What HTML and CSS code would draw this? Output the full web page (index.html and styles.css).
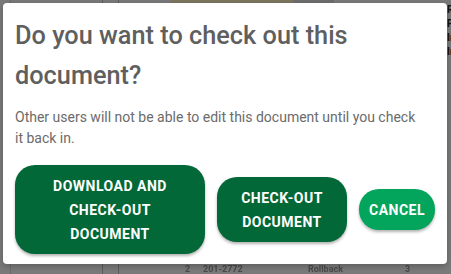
FILE: index.html
```html
<!DOCTYPE html>
<html lang="en">
<head>
<meta charset="utf-8">
<title>Check out document</title>
<link rel="stylesheet" href="styles.css">
</head>
<body>
<div class="page">
  <div class="side"><div class="side-inner"></div></div>
  <div class="gutter"></div>
  <div class="main">
    <div class="topbar"><span class="tb-a"></span><span class="tb-b"></span></div>
    <div class="spacer"></div>
    <div class="row-line"></div>
    <div class="row-line"></div>
    <div class="bottom-row"><span class="c1">2</span><span class="c2">201-2772</span><span class="c3">Rollback</span><span class="c4">3</span></div>
  </div>
  <div class="right-col"><span>R</span><span>P</span><span>In</span><span>In</span></div>
</div>
<div class="overlay">
  <div class="dialog">
    <h1 class="title">Do you want to check out this document?</h1>
    <p class="message">Other users will not be able to edit this document until you check it back in.</p>
    <div class="actions">
      <button class="btn btn-primary btn-wide">DOWNLOAD AND CHECK-OUT DOCUMENT</button>
      <button class="btn btn-primary btn-mid">CHECK-OUT DOCUMENT</button>
      <button class="btn btn-cancel">CANCEL</button>
    </div>
  </div>
</div>
</body>
</html>
```
FILE: styles.css
```css
html, body {
  margin: 0;
  padding: 0;
}
body {
  width: 451px;
  height: 274px;
  overflow: hidden;
  background: #7a7a7a;
  font-family: Roboto, "Liberation Sans", sans-serif;
  position: relative;
}
.page {
  display: flex;
  height: 274px;
}
.side {
  width: 102px;
  border-right: 1px solid #5c5c5c;
  display: flex;
}
.side-inner {
  margin-left: 10px;
  border-left: 1px solid #6a6a6a;
  flex: 1;
}
.gutter {
  width: 15px;
  border-right: 1px solid #5c5c5c;
}
.main {
  flex: 1;
  display: flex;
  flex-direction: column;
}
.topbar {
  height: 3px;
  display: flex;
}
.tb-a {
  margin-left: 52px;
  width: 123px;
  background: #7d7660;
}
.tb-b {
  width: 40px;
  background: #6e6e6e;
}
.spacer {
  flex: 1;
}
.row-line {
  height: 15px;
  border-top: 1px solid #6c6c6c;
}
.bottom-row {
  height: 10px;
  display: flex;
  font-size: 9px;
  line-height: 10px;
  color: #4a4a4a;
  font-weight: 700;
  filter: blur(0.5px);
}
.c1 { margin-left: 66px; width: 18px; }
.c2 { width: 105px; }
.c3 { width: 97px; }
.right-col {
  width: 4px;
  display: flex;
  flex-direction: column;
  padding-top: 5px;
  gap: 4px;
  font-size: 10px;
  line-height: 10px;
  font-weight: 700;
  color: #111;
  overflow: hidden;
  white-space: nowrap;
}
.overlay {
  position: absolute;
  left: 3px;
  top: 3px;
}
.dialog {
  width: 420px;
  height: 239px;
  background: #fff;
  border-radius: 4px;
  padding: 13px 12px 9px 12px;
  box-shadow: 0 2px 6px rgba(0, 0, 0, 0.25);
}
.title {
  margin: 0;
  font-size: 25.3px;
  line-height: 40px;
  font-weight: 500;
  color: #5f5f5f;
}
.message {
  margin: 11px 0 0;
  padding-right: 14px;
  font-size: 14px;
  line-height: 21px;
  color: #6b6b6b;
}
.actions {
  margin-top: 16px;
  display: flex;
  align-items: center;
  gap: 12px;
}
.btn {
  border: none;
  margin: 0;
  font-family: Roboto, "Liberation Sans", sans-serif;
  font-size: 14px;
  font-weight: 700;
  letter-spacing: 0.5px;
  line-height: 24px;
  color: #fff;
  text-align: center;
  padding: 8.5px 10px;
  border-radius: 20px;
  box-shadow: 0 2px 3px rgba(0, 0, 0, 0.3);
}
.btn-primary {
  background: #036838;
}
.btn-wide {
  width: 190px;
  padding-left: 36px;
  padding-right: 36px;
}
.btn-mid {
  width: 130px;
}
.btn-cancel {
  width: 76px;
  background: #02a55b;
  padding-left: 4px;
  padding-right: 4px;
}
```
